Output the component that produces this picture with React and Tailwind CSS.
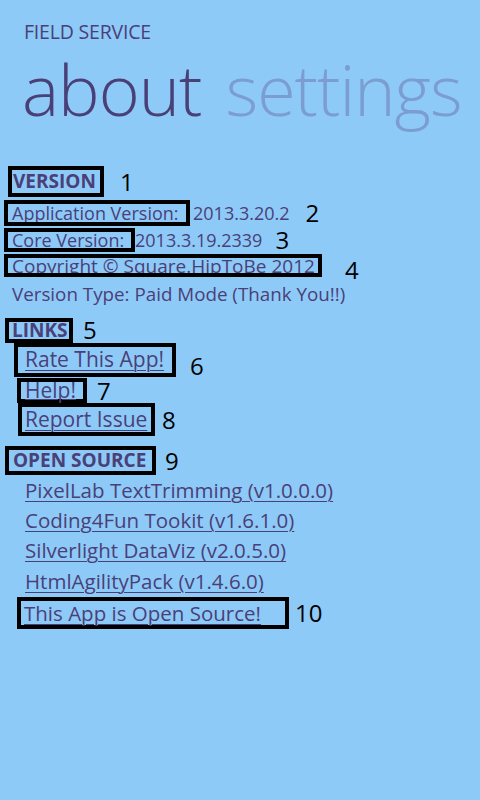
const font = { fontFamily: '"Open Sans", "Noto Sans", sans-serif' };

function Box({ w, h, className = "", children }) {
  return (
    <div
      className={`border-4 border-black flex items-center shrink-0 ${className}`}
      style={{ width: w, height: h }}
    >
      {children}
    </div>
  );
}

function Num({ children, className = "" }) {
  return <span className={`text-[24px] leading-none text-black ${className}`}>{children}</span>;
}

function Link({ children, className = "underline-offset-[3px]" }) {
  return <span className={`underline decoration-1 ${className}`}>{children}</span>;
}

export default function App() {
  return (
    <div className="w-[480px] h-[800px] bg-[#8ecaf7] text-[#4a4078] overflow-hidden" style={font}>
      <div className="pl-[24px] pt-[20px] text-[19.5px] leading-[24px] tracking-[-0.2px]">FIELD SERVICE</div>
      <div className="flex items-baseline pl-[22px] mt-[5px] h-[80px] text-[70px] leading-[80px] font-light tracking-[-1px]">
        <span>about</span>
        <span className="ml-[24px] text-[#7b9dd0]">settings</span>
      </div>

      <div className="mt-[37px] text-[18px]">
        {/* 1 */}
        <div className="flex items-center h-[31px]">
          <Box w={96} h={31} className="ml-[8px] pl-[1px] text-[19px] leading-none font-bold overflow-hidden">VERSION</Box>
          <Num className="ml-[16px]">1</Num>
        </div>
        {/* 2 */}
        <div className="flex items-center h-[26px] mt-[3px]">
          <Box w={186} h={26} className="ml-[4px] pl-[4px] overflow-hidden">Application Version:</Box>
          <span className="ml-[3px]">2013.3.20.2</span>
          <Num className="ml-[16px]">2</Num>
        </div>
        {/* 3 */}
        <div className="flex items-center h-[24px] mt-[2px]">
          <Box w={131} h={24} className="ml-[4px] pl-[4px] overflow-hidden">Core Version:</Box>
          <span>2013.3.19.2339</span>
          <Num className="ml-[13px]">3</Num>
        </div>
        {/* 4 */}
        <div className="flex items-center h-[23px] mt-[2px]">
          <Box w={318} h={23} className="ml-[4px] pl-[4px] !items-start overflow-hidden">
            <span className="text-[19px] leading-[16px] whitespace-nowrap">Copyright © Square.HipToBe 2012</span>
          </Box>
          <Num className="ml-[23px] mt-[9px]">4</Num>
        </div>
        <div className="h-[34px] flex items-center pl-[12px] text-[18.8px]">Version Type: Paid Mode (Thank You!!)</div>

        {/* 5 */}
        <div className="flex items-start h-[25px] mt-[7px]">
          <Box w={68} h={25} className="ml-[5px] pl-[3px] text-[19px] leading-none font-bold overflow-hidden">LINKS</Box>
          <Num className="ml-[10px]">5</Num>
        </div>
        {/* 6 */}
        <div className="flex items-center h-[34px] text-[21px]">
          <Box w={162} h={34} className="ml-[14px] pl-[7px]"><Link>Rate This App!</Link></Box>
          <Num className="ml-[14px] mt-[12px]">6</Num>
        </div>
        {/* 7 */}
        <div className="flex items-center h-[25px] mt-[1px] text-[21px]">
          <Box w={70} h={25} className="ml-[17px] pl-[4px] !items-start">
            <span className="leading-[17px]"><Link className="underline-offset-[1px]">Help!</Link></span>
          </Box>
          <Num className="ml-[10px]">7</Num>
        </div>
        {/* 8 */}
        <div className="flex items-center h-[33px] text-[21px]">
          <Box w={137} h={33} className="ml-[18px] pl-[3px]"><Link>Report Issue</Link></Box>
          <Num className="ml-[7px]">8</Num>
        </div>
        {/* 9 */}
        <div className="flex items-center h-[29px] mt-[10px]">
          <Box w={151} h={29} className="ml-[5px] pl-[4px] text-[19px] leading-none font-bold overflow-hidden">OPEN SOURCE</Box>
          <Num className="ml-[9px]">9</Num>
        </div>

        <div className="flex flex-col pl-[25px] text-[20.5px]">
          <div className="h-[30px] flex items-center"><Link>PixelLab TextTrimming (v1.0.0.0)</Link></div>
          <div className="h-[30px] flex items-center"><Link>Coding4Fun Tookit (v1.6.1.0)</Link></div>
          <div className="h-[31px] flex items-center"><Link>Silverlight DataViz (v2.0.5.0)</Link></div>
          <div className="h-[30px] flex items-center"><Link>HtmlAgilityPack (v1.4.6.0)</Link></div>
        </div>
        {/* 10 */}
        <div className="flex items-center h-[32px] mt-[1px] text-[20.5px]">
          <Box w={272} h={32} className="ml-[17px] pl-[3px]"><Link>This App is Open Source!</Link></Box>
          <Num className="ml-[6px]">10</Num>
        </div>
      </div>
    </div>
  );
}
